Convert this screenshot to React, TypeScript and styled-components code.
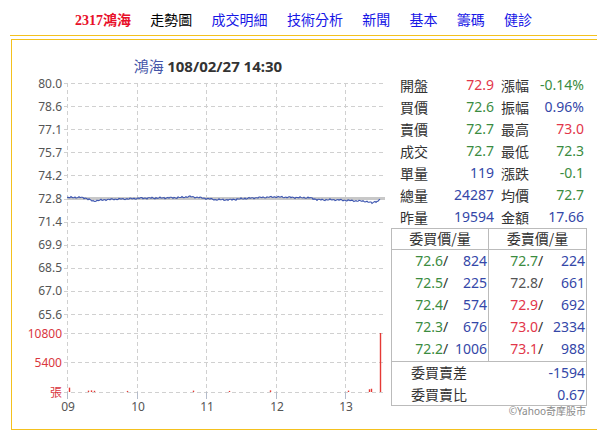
import React from "react";
import styled, { createGlobalStyle } from "styled-components";

const GlobalStyle = createGlobalStyle`
  html, body { margin: 0; padding: 0; background: #fff; overflow: hidden; }
  body { font-family: "Noto Sans", "Noto Sans CJK TC", sans-serif; }
`;

const GOLD = "#f4c11e";
const RED = "#e2364a";
const GREEN = "#3b8c3f";
const BLUE = "#3447a8";
const GREY = "#555";
const INK = "#333";

const Page = styled.div`
  width: 597px;
  height: 437px;
  overflow: hidden;
`;

const Nav = styled.nav`
  box-sizing: border-box;
  height: 36px;
  margin-left: 10px;
  padding: 3px 0 0 65px;
  display: flex;
  align-items: center;
  gap: 19.3px;
  border-bottom: 1px solid ${GOLD};
  white-space: nowrap;
  overflow: hidden;
  font-family: "Noto Sans CJK TC", sans-serif;
  font-size: 14px;
`;

const NavItem = styled.span<{ $tone: "stock" | "current" | "link" }>`
  color: ${(p) => (p.$tone === "stock" ? "#e8102a" : p.$tone === "current" ? "#000" : "#1616e6")};
  font-weight: ${(p) => (p.$tone === "stock" ? 700 : 400)};
  font-family: ${(p) =>
    p.$tone === "stock" ? `"Liberation Serif", "Noto Sans CJK TC", serif` : `"Noto Sans CJK TC", sans-serif`};
  flex: none;
`;

const Box = styled.div`
  margin: 3px 0 0 11px;
  width: 620px;
  height: 389px;
  border: 1px solid ${GOLD};
  display: flex;
`;

const ChartSvg = styled.svg`
  display: block;
  flex: none;
`;

const Panel = styled.div`
  flex: none;
  width: 196px;
  padding-top: 34px;
  font-family: "Noto Sans", "Noto Sans CJK TC", sans-serif;
  font-size: 14px;
`;

const Stats = styled.div`
  display: grid;
  grid-template-columns: 9px 30px 64px 7px 30px 53px;
  grid-auto-rows: 22px;
  align-items: center;
  line-height: 22px;
`;

const Label = styled.span<{ $col: number }>`
  grid-column: ${(p) => p.$col};
  color: ${INK};
  font-family: "Noto Sans CJK TC", sans-serif;
  white-space: nowrap;
`;

const Value = styled.span<{ $col: number; $c: string }>`
  grid-column: ${(p) => p.$col};
  color: ${(p) => p.$c};
  text-align: right;
  white-space: nowrap;
`;

const Book = styled.div`
  width: 196px;
  box-sizing: border-box;
  border: 1px solid #bbb;
`;

const BookHead = styled.div`
  display: grid;
  grid-template-columns: 97px 1fr;
  height: 20px;
  border-bottom: 1px solid #bbb;
`;

const HeadCell = styled.div<{ $divider?: boolean }>`
  text-align: center;
  line-height: 19px;
  color: ${INK};
  font-family: "Noto Sans CJK TC", sans-serif;
  border-right: ${(p) => (p.$divider ? "1px solid #bbb" : "none")};
`;

const BookBody = styled.div`
  display: grid;
  grid-template-columns: 97px 1fr;
  border-bottom: 1px solid #bbb;
`;

const Side = styled.div<{ $divider?: boolean }>`
  padding: 0 0 1px;
  border-right: ${(p) => (p.$divider ? "1px solid #bbb" : "none")};
`;

const Level = styled.div<{ $priceW: number }>`
  display: grid;
  grid-template-columns: ${(p) => p.$priceW}px 8px 1fr;
  height: 22px;
  line-height: 22px;
  padding-right: 1px;
`;

const Price = styled.span<{ $c: string }>`
  color: ${(p) => p.$c};
  text-align: right;
`;

const Slash = styled.span`
  color: ${INK};
`;

const Qty = styled.span`
  color: ${BLUE};
  text-align: right;
`;

const SumRow = styled.div`
  display: flex;
  justify-content: space-between;
  height: 21.5px;
  line-height: 21.5px;
  padding: 0 1px 0 19px;
`;

const SumLabel = styled.span`
  color: ${INK};
  font-family: "Noto Sans CJK TC", sans-serif;
`;

const SumValue = styled.span`
  color: ${BLUE};
`;

const Copy = styled.div`
  width: 195px;
  text-align: right;
  font-size: 10px;
  line-height: 10px;
  color: #8a8a8a;
  padding-top: 0px;
  font-family: "Noto Sans", "Noto Sans CJK TC", sans-serif;
`;

const stats: [string, string, string, string, string, string][] = [
  ["開盤", "72.9", RED, "漲幅", "-0.14%", GREEN],
  ["買價", "72.6", GREEN, "振幅", "0.96%", BLUE],
  ["賣價", "72.7", GREEN, "最高", "73.0", RED],
  ["成交", "72.7", GREEN, "最低", "72.3", GREEN],
  ["單量", "119", BLUE, "漲跌", "-0.1", GREEN],
  ["總量", "24287", BLUE, "均價", "72.7", GREEN],
  ["昨量", "19594", BLUE, "金額", "17.66", BLUE],
];

const bids: [string, string][] = [
  ["72.6", "824"],
  ["72.5", "225"],
  ["72.4", "574"],
  ["72.3", "676"],
  ["72.2", "1006"],
];
const asks: [string, string, string][] = [
  ["72.7", "224", GREEN],
  ["72.8", "661", GREY],
  ["72.9", "692", RED],
  ["73.0", "2334", RED],
  ["73.1", "988", RED],
];

const priceLabels = ["80.0", "78.6", "77.1", "75.7", "74.2", "72.8", "71.4", "69.9", "68.5", "67.0", "65.6"];
const py = (p: number) => 83 + (80 - p) * 16.04;
const xTicks: [number, string][] = [
  [67, "09"],
  [137, "10"],
  [206, "11"],
  [276, "12"],
  [345, "13"],
];

const keys: [number, number][] = [
  [67, 72.86], [80, 72.87], [86, 72.82], [93, 72.63], [98, 72.68], [105, 72.72], [115, 72.76],
  [130, 72.78], [140, 72.82], [160, 72.83], [180, 72.86], [190, 72.92], [200, 72.85], [206, 72.8],
  [215, 72.73], [230, 72.72], [245, 72.8], [260, 72.86], [275, 72.9], [290, 72.87], [310, 72.84],
  [318, 72.72], [335, 72.72], [350, 72.67], [365, 72.63], [372, 72.52], [375, 72.62], [378, 72.6], [380, 72.76],
];

function linePoints(): string {
  const pts: string[] = [];
  for (let x = 67; x <= 380; x += 1) {
    let i = 0;
    while (i < keys.length - 2 && keys[i + 1][0] < x) i++;
    const [x0, p0] = keys[i];
    const [x1, p1] = keys[i + 1];
    const t = Math.min(1, Math.max(0, (x - x0) / (x1 - x0)));
    const base = p0 + (p1 - p0) * t;
    const noise = 0.03 * Math.sin(x * 1.7) + 0.02 * Math.sin(x * 0.63 + 1) + 0.015 * Math.sin(x * 3.1 + 2);
    pts.push(`${x},${py(base + (x === 380 ? 0 : noise)).toFixed(1)}`);
  }
  return pts.join(" ");
}

const volBars: [number, number][] = [
  [69, 800], [88, 250], [91, 300], [94, 220], [127, 200], [193, 250], [229, 200], [270, 300],
  [348, 250], [369, 500], [371, 600], [380, 10800],
];
const vy = (v: number) => 392 - (v / 10800) * 59;

function Chart() {
  const gridYs = priceLabels.map((_, i) => 83 + i * 23.1);
  return (
    <ChartSvg width={379} height={389} viewBox="12 40 379 389">
      <text x={208} y={72} textAnchor="middle" fontSize={15} fontFamily='"Noto Sans", "Noto Sans CJK TC", sans-serif'>
        <tspan fill="#4455a8" fontFamily='"Noto Sans CJK TC", sans-serif'>鴻海 </tspan>
        <tspan fill="#333" fontWeight={700}>108/02/27 14:30</tspan>
      </text>
      <g stroke="#d0d0d0" strokeDasharray="4 3" strokeWidth={1}>
        {gridYs.map((y) => (
          <line key={y} x1={64} x2={385} y1={Math.round(y) + 0.5} y2={Math.round(y) + 0.5} />
        ))}
        {[333, 362, 392].map((y) => (
          <line key={y} x1={64} x2={385} y1={y + 0.5} y2={y + 0.5} />
        ))}
        {xTicks.map(([x]) => (
          <line key={x} x1={x + 0.5} x2={x + 0.5} y1={83} y2={392} />
        ))}
      </g>
      <g stroke="#b4bccb" strokeWidth={1}>
        {xTicks.map(([x]) => (
          <line key={x} x1={x + 0.5} x2={x + 0.5} y1={392} y2={399} />
        ))}
      </g>
      <g fontSize={12} fill={GREY} textAnchor="end" fontFamily='"Noto Sans", sans-serif'>
        {priceLabels.map((l, i) => (
          <text key={l} x={62} y={gridYs[i] + 4.5}>
            {l}
          </text>
        ))}
      </g>
      <g fontSize={12} fill="#d9363e" textAnchor="end" fontFamily='"Noto Sans", "Noto Sans CJK TC", sans-serif'>
        <text x={62} y={337.5}>10800</text>
        <text x={62} y={366.5}>5400</text>
        <text x={62} y={396.5} fontFamily='"Noto Sans CJK TC", sans-serif'>張</text>
      </g>
      <g fontSize={12} fill={GREY} textAnchor="middle" fontFamily='"Noto Sans", sans-serif'>
        {xTicks.map(([x, l]) => (
          <text key={l} x={x + 1} y={411}>
            {l}
          </text>
        ))}
      </g>
      <line x1={67} x2={385} y1={py(72.8)} y2={py(72.8)} stroke="#c8c8c8" strokeWidth={3} />
      <polyline points={linePoints()} fill="none" stroke="#3d56b0" strokeWidth={1.1} />
      <g stroke="#e53935" strokeWidth={1.4}>
        {volBars.map(([x, v]) => (
          <line key={x} x1={x + 0.5} x2={x + 0.5} y1={vy(v)} y2={392} />
        ))}
      </g>
    </ChartSvg>
  );
}

export default function App() {
  return (
    <Page>
      <GlobalStyle />
      <Nav>
        <NavItem $tone="stock">2317鴻海</NavItem>
        <NavItem $tone="current">走勢圖</NavItem>
        <NavItem $tone="link">成交明細</NavItem>
        <NavItem $tone="link">技術分析</NavItem>
        <NavItem $tone="link">新聞</NavItem>
        <NavItem $tone="link">基本</NavItem>
        <NavItem $tone="link">籌碼</NavItem>
        <NavItem $tone="link">健診</NavItem>
      </Nav>
      <Box>
        <Chart />
        <Panel>
          <Stats>
            {stats.map(([l1, v1, c1, l2, v2, c2]) => (
              <React.Fragment key={l1}>
                <Label $col={2}>{l1}</Label>
                <Value $col={3} $c={c1}>{v1}</Value>
                <Label $col={5}>{l2}</Label>
                <Value $col={6} $c={c2}>{v2}</Value>
              </React.Fragment>
            ))}
          </Stats>
          <Book>
            <BookHead>
              <HeadCell $divider>委買價/量</HeadCell>
              <HeadCell>委賣價/量</HeadCell>
            </BookHead>
            <BookBody>
              <Side $divider>
                {bids.map(([p, q]) => (
                  <Level key={p} $priceW={51}>
                    <Price $c={GREEN}>{p}</Price>
                    <Slash>/</Slash>
                    <Qty>{q}</Qty>
                  </Level>
                ))}
              </Side>
              <Side>
                {asks.map(([p, q, c]) => (
                  <Level key={p} $priceW={49}>
                    <Price $c={c}>{p}</Price>
                    <Slash>/</Slash>
                    <Qty>{q}</Qty>
                  </Level>
                ))}
              </Side>
            </BookBody>
            <SumRow>
              <SumLabel>委買賣差</SumLabel>
              <SumValue>-1594</SumValue>
            </SumRow>
            <SumRow>
              <SumLabel>委買賣比</SumLabel>
              <SumValue>0.67</SumValue>
            </SumRow>
          </Book>
          <Copy>©Yahoo奇摩股市</Copy>
        </Panel>
      </Box>
    </Page>
  );
}
